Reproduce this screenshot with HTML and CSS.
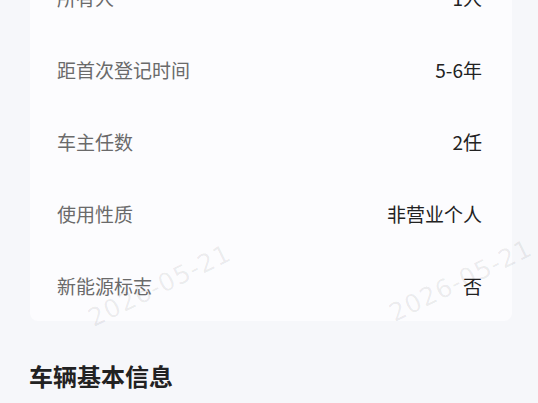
FILE: index.html
```
<!DOCTYPE html>
<html lang="zh-CN">
<head>
    <meta charset="UTF-8">
    <meta name="viewport" content="width=device-width, initial-scale=1.0">
    <title>车辆信息</title>
    <link rel="stylesheet" href="styles.css">
</head>
<body>
    <div class="page">
        <!-- 登记信息 -->
        <div class="card">
            <div class="row"><span class="label">所有人</span><span class="value">1人</span></div>
            <div class="row"><span class="label">距首次登记时间</span><span class="value">5-6年</span></div>
            <div class="row"><span class="label">车主任数</span><span class="value">2任</span></div>
            <div class="row"><span class="label">使用性质</span><span class="value">非营业个人</span></div>
            <div class="row"><span class="label">新能源标志</span><span class="value">否</span></div>
        </div>

        <h2 class="title">车辆基本信息</h2>

        <!-- 水印 -->
        <span class="watermark wm-left">2026-05-21</span>
        <span class="watermark wm-right">2026-05-21</span>
    </div>
</body>
</html>
```

FILE: styles.css
```
* {
    box-sizing: border-box;
}

body {
    margin: 0;
    background-color: #f6f7fa;
    font-family: "Noto Sans CJK SC", "Noto Sans", sans-serif;
    overflow: hidden;
}

.page {
    position: relative;
    padding: 0 26px 0 30px;
}

.card {
    margin-top: -39px;
    background-color: #fcfcfe;
    border-radius: 8px;
    padding: 0 30px 0 27px;
}

.row {
    display: flex;
    justify-content: space-between;
    align-items: center;
    height: 72px;
    font-size: 19px;
}

.label {
    color: #6a6a6a;
}

.value {
    color: #222;
}

.title {
    margin: 38px 0 0 -1px;
    font-size: 24px;
    line-height: 34px;
    font-weight: 700;
    color: #222;
}

/* 水印 */
.watermark {
    position: absolute;
    font-family: "DejaVu Sans", sans-serif;
    font-size: 25px;
    letter-spacing: 1px;
    color: rgba(0, 0, 0, 0.07);
    transform: rotate(-26deg);
    pointer-events: none;
    white-space: nowrap;
}

.wm-left {
    left: 82px;
    top: 310px;
}

.wm-right {
    left: 383px;
    top: 305px;
}
```
